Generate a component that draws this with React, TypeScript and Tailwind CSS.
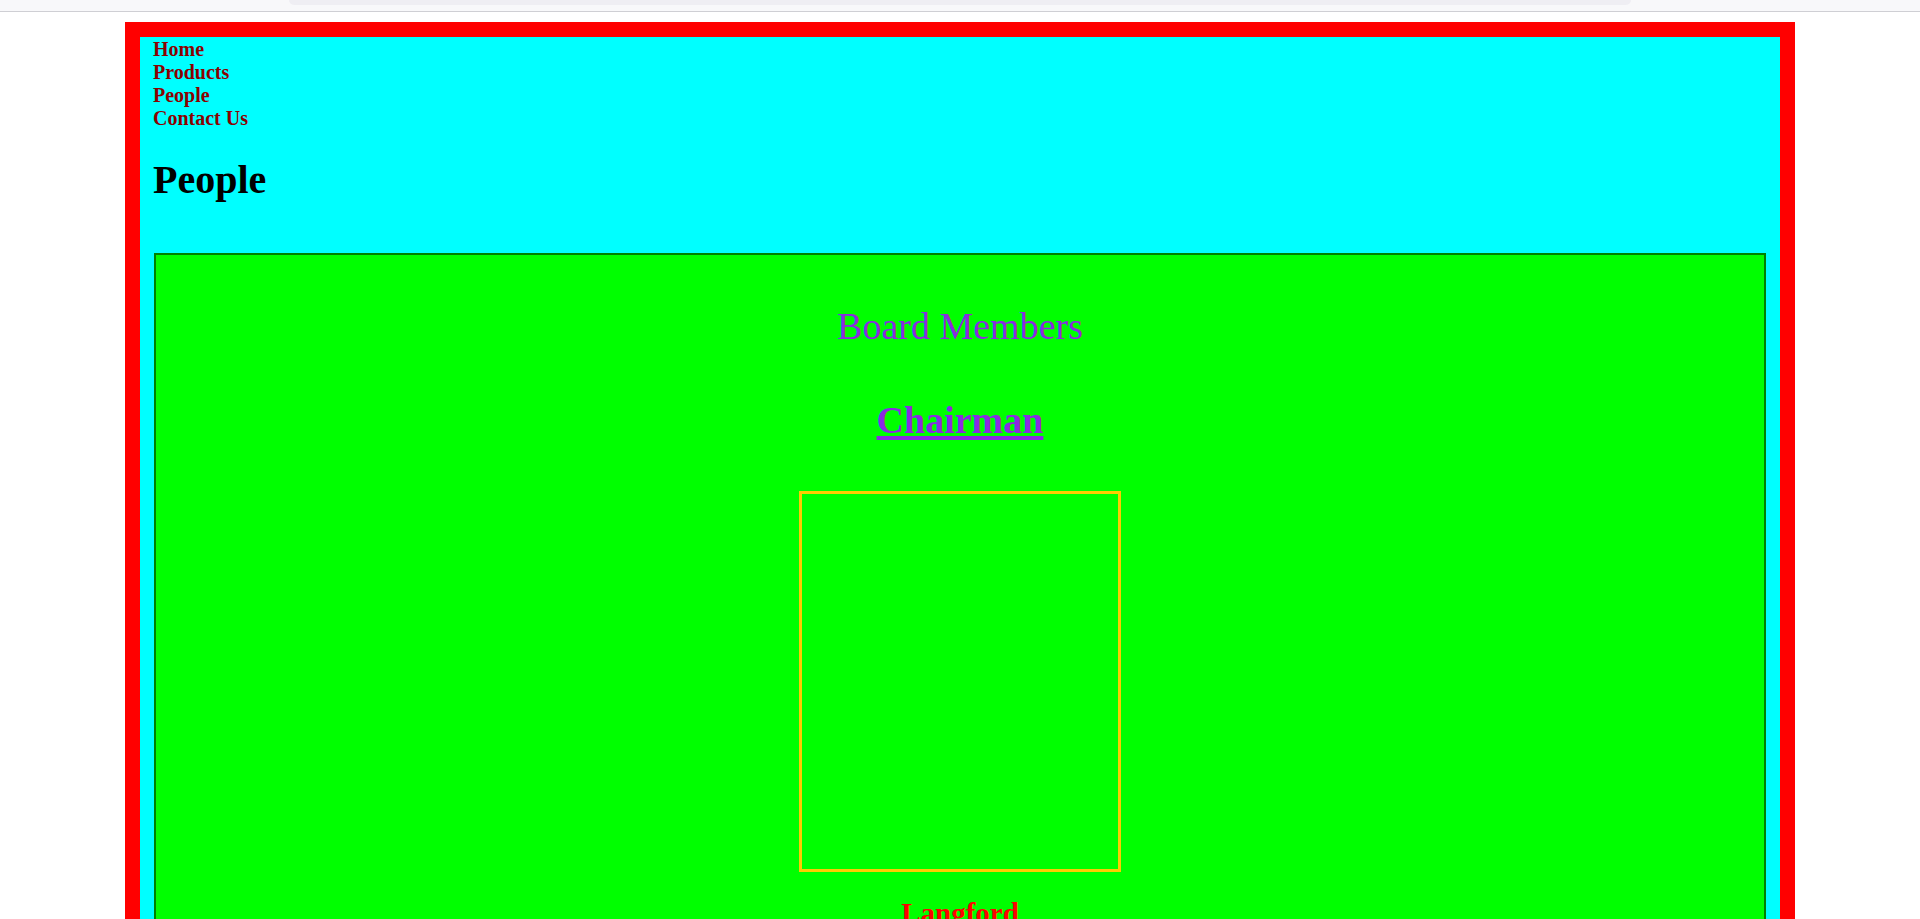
export default function App() {
  const nav = ['Home', 'Products', 'People', 'Contact Us']

  return (
    <div className="min-h-screen bg-white font-[family-name:'Liberation_Serif','Times_New_Roman',serif]">
      {/* browser strip */}
      <div className="relative h-[12px] border-b border-[#cfcfd4] bg-[#f8f8fa]">
        <div className="absolute left-[289px] top-0 h-[5px] w-[1342px] rounded-b-[6px] bg-[#efeef3]" />
      </div>

      <div className="pt-[10px]">
        <div className="mx-auto w-[1670px] border-[15px] border-[#ff0000]">
          <div className="bg-[#00ffff] px-[13px] pt-px">
            <ul className="text-[20px] font-bold leading-[23px] text-[#8b0000]">
              {nav.map((item) => (
                <li key={item}>
                  <a href="#">{item}</a>
                </li>
              ))}
            </ul>

            <h1 className="mt-[27px] text-[40px] font-bold leading-[46px] text-black">People</h1>

            <section className="mx-px mt-[50px] border-2 border-[#008000] bg-[#00ff00] pb-10 pt-[49px] text-center">
              <h2 className="text-[38px] leading-[44px] text-[#8a2be2]">Board Members</h2>
              <h3 className="mt-[50px] text-[38px] font-bold leading-[44px] text-[#8a2be2] underline decoration-[4px] underline-offset-[3px]">
                Chairman
              </h3>
              <div className="mx-auto mt-[49px] h-[381px] w-[322px] border-[3px] border-[#ffcc00]" />
              <p className="mt-[25px] text-[29px] font-bold leading-[33px] text-[#ff0000]">Langford</p>
              <p className="mt-4 text-[20px] text-black">Chairman of the Board</p>
            </section>
            <div className="h-[14px]" />
          </div>
        </div>
      </div>
    </div>
  )
}
